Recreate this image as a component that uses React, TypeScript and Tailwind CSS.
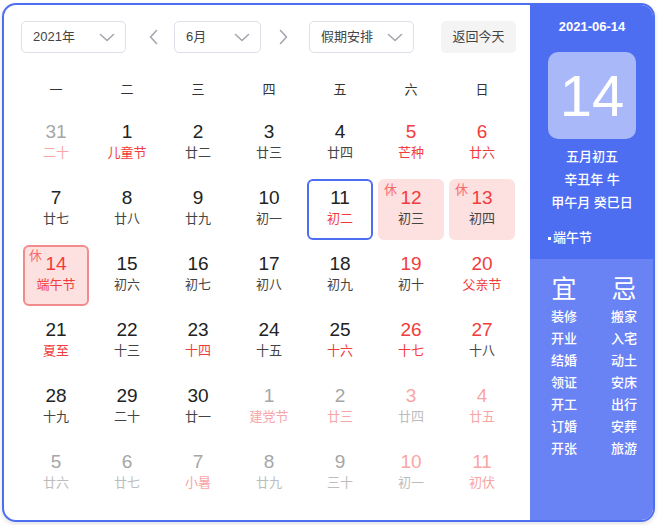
import React from "react";

type Day = {
  n: number;
  l: string;
  nc: string;
  lc: string;
  rest?: boolean;
  today?: boolean;
  sel?: boolean;
};

const DARK = "text-[#222]";
const DARKL = "text-[#444]";
const RED = "text-[#f23c3c]";
const GRAY = "text-[#a6a6a6]";
const GRAYL = "text-[#bdbdbd]";
const PINK = "text-[#f9a5a5]";

const d = (n: number, l: string, nc: string, lc: string, extra: Partial<Day> = {}): Day => ({ n, l, nc, lc, ...extra });

const days: Day[] = [
  d(31, "二十", GRAY, PINK),
  d(1, "儿童节", DARK, RED),
  d(2, "廿二", DARK, DARKL),
  d(3, "廿三", DARK, DARKL),
  d(4, "廿四", DARK, DARKL),
  d(5, "芒种", RED, RED),
  d(6, "廿六", RED, RED),

  d(7, "廿七", DARK, DARKL),
  d(8, "廿八", DARK, DARKL),
  d(9, "廿九", DARK, DARKL),
  d(10, "初一", DARK, DARKL),
  d(11, "初二", DARK, RED, { today: true }),
  d(12, "初三", RED, DARKL, { rest: true }),
  d(13, "初四", RED, DARKL, { rest: true }),

  d(14, "端午节", RED, RED, { rest: true, sel: true }),
  d(15, "初六", DARK, DARKL),
  d(16, "初七", DARK, DARKL),
  d(17, "初八", DARK, DARKL),
  d(18, "初九", DARK, DARKL),
  d(19, "初十", RED, DARKL),
  d(20, "父亲节", RED, RED),

  d(21, "夏至", DARK, RED),
  d(22, "十三", DARK, DARKL),
  d(23, "十四", DARK, RED),
  d(24, "十五", DARK, DARKL),
  d(25, "十六", DARK, RED),
  d(26, "十七", RED, RED),
  d(27, "十八", RED, DARKL),

  d(28, "十九", DARK, DARKL),
  d(29, "二十", DARK, DARKL),
  d(30, "廿一", DARK, DARKL),
  d(1, "建党节", GRAY, PINK),
  d(2, "廿三", GRAY, PINK),
  d(3, "廿四", PINK, GRAYL),
  d(4, "廿五", PINK, PINK),

  d(5, "廿六", GRAY, GRAYL),
  d(6, "廿七", GRAY, GRAYL),
  d(7, "小暑", GRAY, PINK),
  d(8, "廿九", GRAY, GRAYL),
  d(9, "三十", GRAY, GRAYL),
  d(10, "初一", PINK, GRAYL),
  d(11, "初伏", PINK, PINK),
];

const weekdays = ["一", "二", "三", "四", "五", "六", "日"];
const yi = ["装修", "开业", "结婚", "领证", "开工", "订婚", "开张"];
const ji = ["搬家", "入宅", "动土", "安床", "出行", "安葬", "旅游"];

function ChevronDown() {
  return (
    <svg width="16" height="9" viewBox="0 0 16 9" fill="none" stroke="#a3a6ad" strokeWidth="1.6" strokeLinecap="round" strokeLinejoin="round">
      <path d="M1.5 1.5 L8 7.5 L14.5 1.5" />
    </svg>
  );
}

function Arrow({ dir }: { dir: "left" | "right" }) {
  return (
    <button className="flex h-[32px] w-[20px] items-center justify-center">
      <svg width="9" height="16" viewBox="0 0 9 16" fill="none" stroke="#a3a6ad" strokeWidth="1.6" strokeLinecap="round" strokeLinejoin="round">
        {dir === "left" ? <path d="M7.5 1.5 L1.5 8 L7.5 14.5" /> : <path d="M1.5 1.5 L7.5 8 L1.5 14.5" />}
      </svg>
    </button>
  );
}

function Select({ label, width }: { label: string; width: string }) {
  return (
    <div className={`flex h-[32px] ${width} items-center justify-between rounded-[5px] border border-[#dcdfe6] bg-white pl-[11px] pr-[10px] text-[13px] text-[#444]`}>
      <span>{label}</span>
      <ChevronDown />
    </div>
  );
}

function Cell({ day }: { day: Day }) {
  let box = "border-2 border-transparent";
  if (day.today) box = "border-2 border-[#4e6ef2] bg-white";
  else if (day.sel) box = "border-2 border-[#f28b8b] bg-[#fde0e0]";
  else if (day.rest) box = "border-2 border-transparent bg-[#fde0e0]";
  return (
    <div className={`relative flex h-[61px] flex-col items-center rounded-[6px] pt-[7px] ${box}`}>
      {day.rest && <span className="absolute left-[4px] top-[1px] text-[13px] leading-[16px] text-[#f56c6c]">休</span>}
      <span className={`text-[19px] leading-[20px] ${day.nc}`}>{day.n}</span>
      <span className={`mt-[2px] text-[13px] leading-[18px] ${day.lc}`}>{day.l}</span>
    </div>
  );
}

export default function App() {
  return (
    <div className="h-[525px] w-[658px] bg-white pl-[2px] pt-[3px]" style={{ fontFamily: '"Liberation Sans", Arial, "Noto Sans CJK SC", sans-serif' }}>
      <div className="flex h-[519px] w-[653px] overflow-hidden rounded-[14px] border-2 border-[#4e6ef2] bg-white shadow-[0_2px_5px_rgba(0,0,0,0.12)]">
        <div className="w-[526px] shrink-0 pt-[16px]">
          <div className="ml-[17px] flex items-center">
            <Select label="2021年" width="w-[105px]" />
            <div className="ml-[17px]">
              <Arrow dir="left" />
            </div>
            <div className="ml-[11px]">
              <Select label="6月" width="w-[87px]" />
            </div>
            <div className="ml-[12px]">
              <Arrow dir="right" />
            </div>
            <div className="ml-[16px]">
              <Select label="假期安排" width="w-[105px]" />
            </div>
            <button className="ml-[27px] h-[32px] w-[75px] rounded-[5px] bg-[#f4f4f5] text-[13px] text-[#444]">返回今天</button>
          </div>

          <div className="ml-[19px] mt-[17px] grid h-[40px] w-[492px] grid-cols-7 gap-x-[5px]">
            {weekdays.map((w) => (
              <div key={w} className="flex items-center justify-center text-[13px] text-[#333]">
                {w}
              </div>
            ))}
          </div>

          <div className="ml-[19px] mt-[3px] grid w-[492px] grid-cols-7 gap-[5px]">
            {days.map((day, i) => (
              <Cell key={i} day={day} />
            ))}
          </div>
        </div>

        <div className="flex flex-1 flex-col text-white">
          <div className="flex h-[254px] flex-col items-center bg-[#4e6ef2] pt-[12px]">
            <div className="text-[13px] font-bold leading-[20px]">2021-06-14</div>
            <div className="mt-[15px] flex h-[87px] w-[88px] items-center justify-center rounded-[10px] bg-[#a9b8f8] text-[58px] leading-none">14</div>
            <div className="mt-[6px] flex flex-col items-center text-[13px] font-medium leading-[23px]">
              <span>五月初五</span>
              <span>辛丑年 牛</span>
              <span>甲午月 癸巳日</span>
            </div>
            <div className="mt-[14px] flex w-[88px] items-center text-[13px] font-medium leading-[20px]">
              <span className="mr-[2px] inline-block h-[3px] w-[3px] bg-white" />
              端午节
            </div>
          </div>
          <div className="flex flex-1 bg-[#6a83f4] pl-[4px] pt-[15px]">
            {[
              { t: "宜", list: yi },
              { t: "忌", list: ji },
            ].map((col) => (
              <div key={col.t} className="flex w-[60px] flex-col items-center">
                <span className="text-[25px] leading-[30px]">{col.t}</span>
                <div className="mt-[2px] flex flex-col items-center text-[13px] font-medium leading-[22px]">
                  {col.list.map((x) => (
                    <span key={x}>{x}</span>
                  ))}
                </div>
              </div>
            ))}
          </div>
        </div>
      </div>
    </div>
  );
}
